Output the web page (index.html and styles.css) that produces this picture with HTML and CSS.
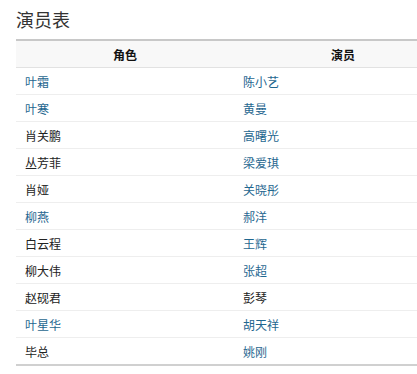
FILE: index.html
```html
<!DOCTYPE html>
<html lang="zh">
<head>
<meta charset="utf-8">
<title>演员表</title>
<link rel="stylesheet" href="styles.css">
</head>
<body>
<div class="page">
  <h2 class="title">演员表</h2>
  <table class="cast">
    <thead>
      <tr><th>角色</th><th>演员</th></tr>
    </thead>
    <tbody>
      <tr><td><a class="lnk">叶霜</a></td><td><a class="lnk">陈小艺</a></td></tr>
      <tr><td><a class="lnk">叶寒</a></td><td><a class="lnk">黄曼</a></td></tr>
      <tr><td>肖关鹏</td><td><a class="lnk">高曙光</a></td></tr>
      <tr><td>丛芳菲</td><td><a class="lnk">梁爱琪</a></td></tr>
      <tr><td>肖娅</td><td><a class="lnk">关晓彤</a></td></tr>
      <tr><td><a class="lnk">柳燕</a></td><td><a class="lnk">郝洋</a></td></tr>
      <tr><td>白云程</td><td><a class="lnk">王辉</a></td></tr>
      <tr><td>柳大伟</td><td><a class="lnk">张超</a></td></tr>
      <tr><td>赵砚君</td><td>彭琴</td></tr>
      <tr><td><a class="lnk">叶星华</a></td><td><a class="lnk">胡天祥</a></td></tr>
      <tr><td>毕总</td><td><a class="lnk">姚刚</a></td></tr>
    </tbody>
  </table>
</div>
</body>
</html>
```

FILE: styles.css
```css
html, body {
  margin: 0;
  padding: 0;
  background: #ffffff;
  overflow: hidden;
}
.page {
  padding: 8px 0 0 16px;
  font-family: "Noto Sans CJK SC", "Liberation Sans", sans-serif;
  color: #222;
  overflow: hidden;
}
.title {
  margin: 0 0 9px 0;
  font-size: 18px;
  line-height: 22px;
  font-weight: normal;
  color: #333;
}
.cast {
  width: 436px;
  border-collapse: collapse;
  table-layout: fixed;
  border-top: 2px solid #c8c8c8;
  border-bottom: 2px solid #d0d0d0;
  font-size: 12px;
}
.cast th {
  height: 26px;
  padding: 0;
  background: #f8f8f8;
  font-weight: bold;
  color: #111;
  text-align: center;
  border-bottom: 1px solid #e2e2e2;
}
.cast td {
  height: 26px;
  padding: 0 0 0 9px;
  text-align: left;
  border-bottom: 1px solid #eeeeee;
}
.cast tbody tr:last-child td {
  border-bottom: none;
}
.lnk {
  color: #1f6790;
  text-decoration: none;
}
```
